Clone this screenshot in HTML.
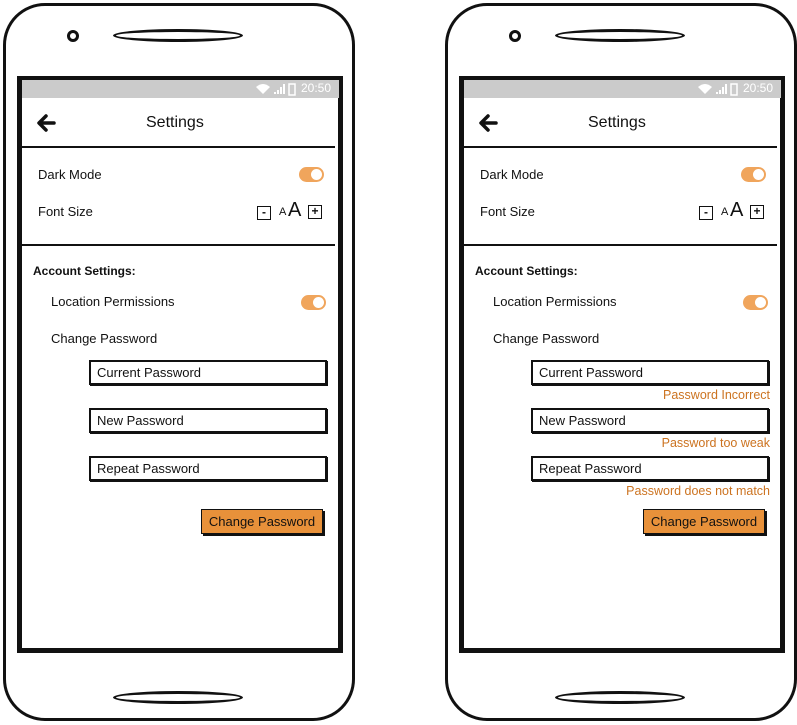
<!DOCTYPE html>
<html><head><meta charset="utf-8"><style>
*{margin:0;padding:0;box-sizing:border-box}
body{width:797px;height:725px;background:#fff;position:relative;overflow:hidden;font-family:"Liberation Sans",sans-serif;color:#111}
.ph{position:absolute;top:0;left:0;width:360px;height:725px}
.a{position:absolute}
.outer{left:3px;top:3px;width:352px;height:718px;border:3.5px solid #111;border-radius:42px}
.screen{left:17px;top:76px;width:326px;height:577px;border:5px solid #111;border-top-width:4px}
.status{left:22px;top:80px;width:317px;height:18px;background:#cbcbcb}
.time{right:8px;top:1px;color:#fff;font-size:12px}
.t{font-size:13px;white-space:nowrap}
.line{height:1.5px;background:#111}
.tog{width:25px;height:15px;border-radius:8px;background:#f0a55c}
.tog::after{content:"";position:absolute;right:2px;top:2px;width:11px;height:11px;border-radius:50%;background:#fff}
.inp{left:89px;width:238px;height:25px;border:2px solid #111;box-shadow:1px 1px 0 #111;font-size:13px;padding:3px 0 0 6px}
.btn{left:201px;top:509px;width:122px;height:25px;background:#e8913a;border:1.5px solid #111;box-shadow:2px 2px 0 #111;font-size:13px;text-align:center;line-height:23px}
.err{right:32px;font-size:12.5px;color:#cc7320}
.sq{width:14px;height:14px;border:1.5px solid #111;font-size:12px;line-height:10px;text-align:center;font-weight:bold}
.ell{left:113px;width:130px;height:13px;border:3px solid #111;border-radius:50%}
</style></head><body>

<div class="ph">
 <div class="a outer"></div>
 <div class="a" style="left:67px;top:30px;width:12px;height:12px;border:3px solid #111;border-radius:50%"></div>
 <div class="a ell" style="top:29px"></div>
 <div class="a ell" style="top:691px"></div>
 <div class="a screen"></div>
 <div class="a status"><svg class="a" style="left:234px;top:3px" width="50" height="13"><path d="M0 4 Q7 -2 14 4 L7 11Z" fill="#fff"/><path d="M18 11h2v-2h-2zM21 11h2v-4h-2zM24 11h2v-7h-2zM27 11h2v-10h-2z" fill="#fff"/><rect x="33" y="1" width="6" height="11" fill="none" stroke="#fff" stroke-width="1.5"/></svg><span class="a time">20:50</span></div>
 <svg class="a" style="left:35px;top:113px" width="22" height="20"><path d="M19 10H5M11 3 4 10l7 7" fill="none" stroke="#111" stroke-width="3.5" stroke-linecap="round" stroke-linejoin="round"/></svg>
 <div class="a" style="left:146px;top:114px;font-size:16px">Settings</div>
 <div class="a line" style="left:22px;top:146px;width:313px"></div>
 <div class="a t" style="left:38px;top:167px">Dark Mode</div>
 <div class="a tog" style="left:299px;top:167px"></div>
 <div class="a t" style="left:38px;top:204px">Font Size</div>
 <div class="a sq" style="left:257px;top:206px">-</div>
 <div class="a" style="left:279px;top:206px;font-size:11px">A</div>
 <div class="a" style="left:288px;top:199px;font-size:20px">A</div>
 <div class="a sq" style="left:308px;top:205px">+</div>
 <div class="a line" style="left:22px;top:244px;width:313px"></div>
 <div class="a t" style="left:33px;top:264px;font-weight:bold;font-size:12px">Account Settings:</div>
 <div class="a t" style="left:51px;top:294px">Location Permissions</div>
 <div class="a tog" style="left:301px;top:295px"></div>
 <div class="a t" style="left:51px;top:331px">Change Password</div>
 <div class="a inp" style="top:360px">Current Password</div>
 <div class="a inp" style="top:408px">New Password</div>
 <div class="a inp" style="top:456px">Repeat Password</div>
 <div class="a btn">Change Password</div>
</div>

<div class="ph" style="left:442px">
 <div class="a outer"></div>
 <div class="a" style="left:67px;top:30px;width:12px;height:12px;border:3px solid #111;border-radius:50%"></div>
 <div class="a ell" style="top:29px"></div>
 <div class="a ell" style="top:691px"></div>
 <div class="a screen"></div>
 <div class="a status"><svg class="a" style="left:234px;top:3px" width="50" height="13"><path d="M0 4 Q7 -2 14 4 L7 11Z" fill="#fff"/><path d="M18 11h2v-2h-2zM21 11h2v-4h-2zM24 11h2v-7h-2zM27 11h2v-10h-2z" fill="#fff"/><rect x="33" y="1" width="6" height="11" fill="none" stroke="#fff" stroke-width="1.5"/></svg><span class="a time">20:50</span></div>
 <svg class="a" style="left:35px;top:113px" width="22" height="20"><path d="M19 10H5M11 3 4 10l7 7" fill="none" stroke="#111" stroke-width="3.5" stroke-linecap="round" stroke-linejoin="round"/></svg>
 <div class="a" style="left:146px;top:114px;font-size:16px">Settings</div>
 <div class="a line" style="left:22px;top:146px;width:313px"></div>
 <div class="a t" style="left:38px;top:167px">Dark Mode</div>
 <div class="a tog" style="left:299px;top:167px"></div>
 <div class="a t" style="left:38px;top:204px">Font Size</div>
 <div class="a sq" style="left:257px;top:206px">-</div>
 <div class="a" style="left:279px;top:206px;font-size:11px">A</div>
 <div class="a" style="left:288px;top:199px;font-size:20px">A</div>
 <div class="a sq" style="left:308px;top:205px">+</div>
 <div class="a line" style="left:22px;top:244px;width:313px"></div>
 <div class="a t" style="left:33px;top:264px;font-weight:bold;font-size:12px">Account Settings:</div>
 <div class="a t" style="left:51px;top:294px">Location Permissions</div>
 <div class="a tog" style="left:301px;top:295px"></div>
 <div class="a t" style="left:51px;top:331px">Change Password</div>
 <div class="a inp" style="top:360px">Current Password</div>
 <div class="a err" style="top:388px">Password Incorrect</div>
 <div class="a inp" style="top:408px">New Password</div>
 <div class="a err" style="top:436px">Password too weak</div>
 <div class="a inp" style="top:456px">Repeat Password</div>
 <div class="a err" style="top:484px">Password does not match</div>
 <div class="a btn">Change Password</div>
</div>

</body></html>
